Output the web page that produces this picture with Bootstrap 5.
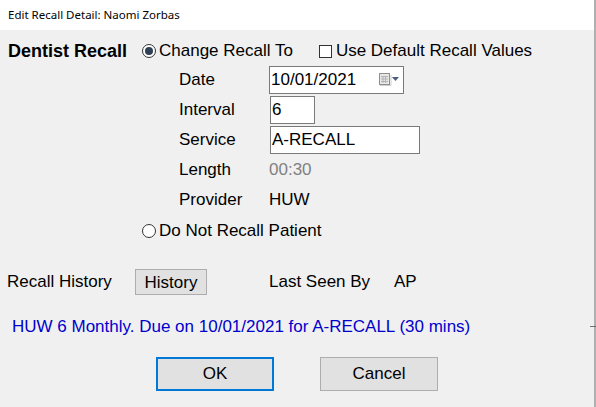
<!DOCTYPE html>
<html lang="en">
<head>
    <meta charset="UTF-8">
    <title>Edit Recall Detail</title>
    <link href="https://cdn.jsdelivr.net/npm/bootstrap@5.3.0/dist/css/bootstrap.min.css" rel="stylesheet">
    <style>
        html, body { height: 100%; }
        body { background: #fff; color: #000; font-family: "Liberation Sans", Arial, sans-serif; font-size: 17px; line-height: 20px; overflow: hidden; }
        .dlg-frame { width: 596px; height: 407px; border-right: 2px solid #b0b0b0; }
        .dlg-title { height: 30px; padding-left: 8px; font-family: "Noto Sans", sans-serif; font-size: 11.5px; line-height: 30px; background: #fff; }
        .dlg-body { position: relative; height: 377px; background: #f0f0f0; padding: 11px 0 0 7px; }
        .edge-tick { position: absolute; right: -2px; top: 296px; width: 6px; height: 1px; background: #707070; }
        .recall-name { width: 135px; padding-left: 1px; font-size: 18px; font-weight: 700; }
        .radio-dot { width: 14px; height: 14px; border: 1px solid #333; border-radius: 50%; background: #fff; margin-right: 3px; flex: none; }
        .radio-on { display: flex; align-items: center; justify-content: center; }
        .radio-on::after { content: ""; width: 8px; height: 8px; border-radius: 50%; background: #2f3f55; }
        .check-box { width: 13px; height: 13px; border: 1px solid #333; background: #fff; margin: 0 4px 0 26px; flex: none; }
        .field-row { height: 30px; padding-left: 172px; }
        .field-label { width: 91px; flex: none; }
        .field-box { height: 28px; background: #fff; border: 1px solid #7a7a7a; padding: 0 1px; line-height: 26px; }
        .box-date { width: 135px; margin-left: -1px; padding-right: 2px; }
        .box-interval { width: 45px; }
        .box-service { width: 150px; }
        .plain-value { margin-left: -1px; }
        .muted-value { color: #808080; }
        .hist-btn { width: 72px; height: 26px; background: #e1e1e1; border: 1px solid #adadad; text-align: center; line-height: 25px; }
        .seen-label { width: 125px; margin-left: 62px; }
        .seen-row { height: 26px; margin-top: 28px; }
        .due-text { color: #0000cd; padding-left: 5px; margin-top: 22px; }
        .dlg-btn { width: 118px; height: 34px; background: #e1e1e1; border: 1px solid #adadad; border-radius: 0; padding: 0; font-size: 17px; color: #000; }
        .dlg-btn.is-default { border: 2px solid #0078d7; }
        .btn-row { margin-top: 20px; padding-left: 149px; gap: 46px; }
        .not-recall { margin-top: 6px; padding-left: 135px; }
    </style>
</head>
<body>
    <div class="dlg-frame">
        <div class="dlg-title">Edit Recall Detail: Naomi Zorbas</div>
        <div class="dlg-body">
            <span class="edge-tick"></span>
            <div class="d-flex align-items-center">
                <div class="recall-name">Dentist Recall</div>
                <span class="radio-dot radio-on"></span>
                <span>Change Recall To</span>
                <span class="check-box"></span>
                <span>Use Default Recall Values</span>
            </div>
            <div class="mt-1">
                <div class="field-row d-flex align-items-center">
                    <span class="field-label">Date</span>
                    <div class="field-box box-date d-flex justify-content-between align-items-center">
                        <span>10/01/2021</span>
                        <svg width="22" height="14" viewBox="0 0 22 14">
                            <rect x="0.5" y="0.5" width="10" height="11" fill="#e8e8e8" stroke="#8f8f8f"/>
                            <path d="M2 3.5H9M2 6H9M2 8.5H9M4 3V10M6.5 3V10" stroke="#b4b4b4" fill="none"/>
                            <path d="M1 12.5H12V2" stroke="#cfcfcf" fill="none"/>
                            <path d="M13 4H20L16.5 8Z" fill="#4d5f80"/>
                        </svg>
                    </div>
                </div>
                <div class="field-row d-flex align-items-center">
                    <span class="field-label">Interval</span>
                    <div class="field-box box-interval">6</div>
                </div>
                <div class="field-row d-flex align-items-center">
                    <span class="field-label">Service</span>
                    <div class="field-box box-service">A-RECALL</div>
                </div>
                <div class="field-row d-flex align-items-center">
                    <span class="field-label">Length</span>
                    <span class="muted-value plain-value">00:30</span>
                </div>
                <div class="field-row d-flex align-items-center">
                    <span class="field-label">Provider</span>
                    <span class="plain-value">HUW</span>
                </div>
            </div>
            <div class="not-recall d-flex align-items-center">
                <span class="radio-dot"></span>
                <span>Do Not Recall Patient</span>
            </div>
            <div class="seen-row d-flex align-items-center">
                <span style="width: 128px">Recall History</span>
                <div class="hist-btn">History</div>
                <span class="seen-label">Last Seen By</span>
                <span class="flex-grow-1">AP</span>
            </div>
            <div class="due-text">HUW 6 Monthly. Due on 10/01/2021 for A-RECALL (30 mins)</div>
            <div class="btn-row d-flex">
                <button type="button" class="dlg-btn is-default">OK</button>
                <button type="button" class="dlg-btn">Cancel</button>
            </div>
        </div>
    </div>
    <script src="https://cdn.jsdelivr.net/npm/bootstrap@5.3.0/dist/js/bootstrap.bundle.min.js"></script>
</body>
</html>
